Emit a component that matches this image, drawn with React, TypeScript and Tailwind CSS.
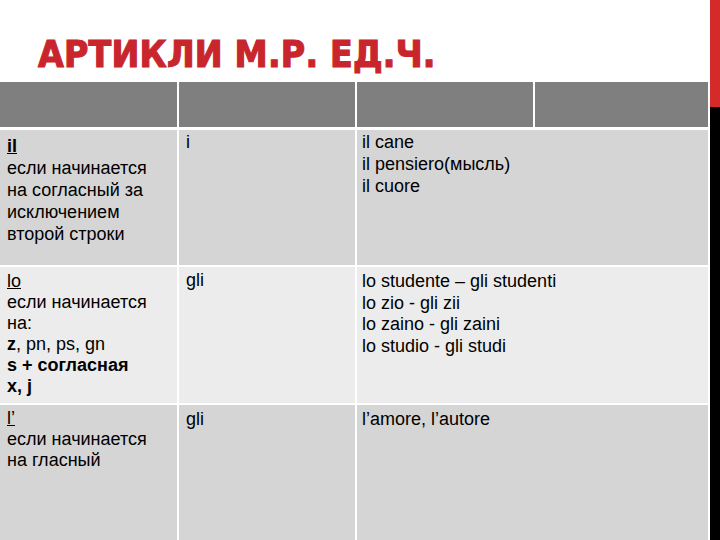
import React from "react";

const font = "font-['Liberation_Sans',Arial,sans-serif]";

export default function App() {
  return (
    <div className={`w-[720px] h-[540px] overflow-hidden bg-white flex ${font}`}>
      <div className="w-[708px] flex flex-col">
        <div className="h-[82px] shrink-0 pl-[38px] pt-[36px]">
          <h1 className="font-['DejaVu_Sans_Condensed','DejaVu_Sans',sans-serif] text-[37px] leading-[37px] font-bold text-[#c8262c] tracking-[0.2px] [-webkit-text-stroke:1.1px_#c8262c] whitespace-nowrap">
            АРТИКЛИ М.Р. ЕД.Ч.
          </h1>
        </div>
        <div className="shrink-0 grid grid-cols-[177px_176px_176px_173px] grid-rows-[45px_138px_138px_140px] gap-x-[2px] text-[18px] leading-[22px] text-black">
          <div className="bg-[#7f7f7f]" />
          <div className="bg-[#7f7f7f]" />
          <div className="bg-[#7f7f7f]" />
          <div className="bg-[#7f7f7f]" />

          <div className="bg-[#d5d5d5] mt-[3px] px-[7px] pt-[5px]">
            <div className="font-bold underline">il</div>
            <div>если начинается</div>
            <div>на согласный за</div>
            <div>исключением</div>
            <div>второй строки</div>
          </div>
          <div className="bg-[#d5d5d5] mt-[3px] px-[7px] pt-[1px]">i</div>
          <div className="col-span-2 bg-[#d5d5d5] mt-[3px] px-[5px] pt-[1px]">
            <div>il cane</div>
            <div>il pensiero(мысль)</div>
            <div>il cuore</div>
          </div>

          <div className="bg-[#ececec] mt-[2px] px-[7px] pt-[4px] leading-[21px]">
            <div className="underline">lo</div>
            <div>если начинается</div>
            <div>на:</div>
            <div><span className="font-bold">z</span>, pn, ps, gn</div>
            <div className="font-bold">s + согласная</div>
            <div className="font-bold">x, j</div>
          </div>
          <div className="bg-[#ececec] mt-[2px] px-[7px] pt-[3px] leading-[21.5px]">gli</div>
          <div className="col-span-2 bg-[#ececec] mt-[2px] px-[5px] pt-[4px] leading-[21.5px]">
            <div>lo studente – gli studenti</div>
            <div>lo zio - gli zii</div>
            <div>lo zaino - gli zaini</div>
            <div>lo studio - gli studi</div>
          </div>

          <div className="bg-[#d5d5d5] mt-[2px] px-[7px] pt-[3px] leading-[21px]">
            <div className="underline">l’</div>
            <div>если начинается</div>
            <div>на гласный</div>
          </div>
          <div className="bg-[#d5d5d5] mt-[2px] px-[7px] pt-[3px]">gli</div>
          <div className="col-span-2 bg-[#d5d5d5] mt-[2px] px-[5px] pt-[3px]">
            <div>l’amore, l’autore</div>
          </div>
        </div>
      </div>
      <div className="w-[2px] shrink-0" />
      <div className="w-[10px] shrink-0 flex flex-col">
        <div className="h-[107px] bg-[#d42a2a]" />
        <div className="flex-1 bg-black" />
      </div>
    </div>
  );
}
